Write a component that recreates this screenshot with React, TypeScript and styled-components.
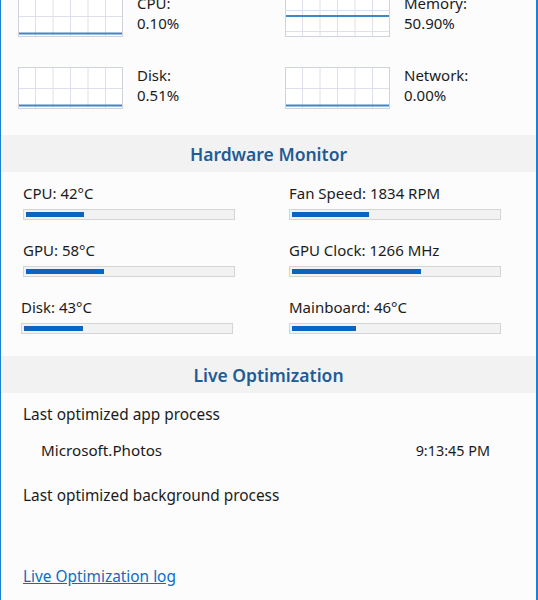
import React from "react";
import styled, { createGlobalStyle } from "styled-components";

const GlobalStyle = createGlobalStyle`
  html, body {
    margin: 0;
    padding: 0;
    background: #fcfcfc;
  }
  body {
    font-family: "Noto Sans", "Open Sans", sans-serif;
    font-size: 15px;
    color: #1b1b1b;
  }
`;

const usage = [
  { id: 1, label: "CPU:", value: "0.10%", level: 0.04, offset: 0 },
  { id: 2, label: "Memory:", value: "50.90%", level: 0.5, offset: 10 },
  { id: 3, label: "Disk:", value: "0.51%", level: 0.04, offset: 0 },
  { id: 4, label: "Network:", value: "0.00%", level: 0.04, offset: 0 },
];

const sensors = [
  { id: 1, label: "CPU: 42°C", pct: 28 },
  { id: 2, label: "Fan Speed: 1834 RPM", pct: 37.5 },
  { id: 3, label: "GPU: 58°C", pct: 38 },
  { id: 4, label: "GPU Clock: 1266 MHz", pct: 62.5 },
  { id: 5, label: "Disk: 43°C", pct: 28.5 },
  { id: 6, label: "Mainboard: 46°C", pct: 31 },
];

interface GraphProps {
  level: number;
  offset: number;
}

// small task-manager style chart with a scrolling grid
const Graph: React.FC<GraphProps> = ({ level, offset }) => {
  const w = 105;
  const h = 42;
  const cols = [17.5, 35, 52.5, 70, 87.5];
  const rows = offset ? [15, 36] : [21];
  const y = h - 2 - level * (h - 4);
  return (
    <svg width={w} height={h} viewBox={`0 0 ${w} ${h}`}>
      <rect x="0.5" y="0.5" width={w - 1} height={h - 1} fill="#ffffff" stroke="#cfd3de" />
      {cols.map((x) => (
        <line key={x} x1={x} y1="1" x2={x} y2={h - 1} stroke="#dde0ea" />
      ))}
      {rows.map((r) => (
        <line key={r} x1="1" y1={r + 0.5} x2={w - 1} y2={r + 0.5} stroke="#dde0ea" />
      ))}
      <line x1="1" y1={y} x2={w - 1} y2={y} stroke="#3f88c5" strokeWidth="2" />
    </svg>
  );
};

export default function App() {
  return (
    <>
      <GlobalStyle />
      <Window>
        <UsageGrid>
          {usage.map((u) => (
            <UsageItem key={u.id}>
              <Graph level={u.level} offset={u.offset} />
              <UsageText>
                <div>{u.label}</div>
                <div>{u.value}</div>
              </UsageText>
            </UsageItem>
          ))}
        </UsageGrid>

        <SectionHeader>Hardware Monitor</SectionHeader>
        <SensorGrid>
          {sensors.map((s) => (
            <Sensor key={s.id} $shift={s.id === 5}>
              <SensorLabel>{s.label}</SensorLabel>
              <Bar>
                <Fill style={{ width: `${s.pct}%` }} />
              </Bar>
            </Sensor>
          ))}
        </SensorGrid>

        <SectionHeader>Live Optimization</SectionHeader>
        <LiveBody>
          <Line>Last optimized app process</Line>
          <ProcessRow>
            <span>Microsoft.Photos</span>
            <Time>9:13:45 PM</Time>
          </ProcessRow>
          <Line>Last optimized background process</Line>
          <LogLink href="#">Live Optimization log</LogLink>
        </LiveBody>
      </Window>
    </>
  );
}

const Window = styled.div`
  box-sizing: border-box;
  width: 538px;
  height: 600px;
  overflow: hidden;
  background: #fcfcfc;
  border-left: 1px solid #1c80d6;
  border-right: 2px solid #1c80d6;
  display: flex;
  flex-direction: column;
`;

const UsageGrid = styled.section`
  display: grid;
  grid-template-columns: 267px 1fr;
  row-gap: 30px;
  margin-top: -5px;
  padding-left: 17px;
  padding-bottom: 26px;
`;

const UsageItem = styled.div`
  display: flex;
  align-items: flex-start;
  gap: 14px;
  height: 42px;
`;

const UsageText = styled.div`
  line-height: 20px;
  margin-top: -2px;
`;

const SectionHeader = styled.h2`
  margin: 0;
  height: 37px;
  background: #f2f2f2;
  display: flex;
  align-items: center;
  justify-content: center;
  font-size: 17.5px;
  font-weight: 600;
  color: #1f5c96;
`;

const SensorGrid = styled.section`
  display: grid;
  grid-template-columns: 266px 1fr;
  row-gap: 21px;
  padding: 12px 0 22px 22px;
`;

const Sensor = styled.div<{ $shift?: boolean }>`
  display: flex;
  flex-direction: column;
  gap: 6px;
  margin-left: ${(p) => (p.$shift ? "-2px" : "0")};
`;

const SensorLabel = styled.div`
  line-height: 19px;
`;

const Bar = styled.div`
  box-sizing: border-box;
  width: 212px;
  height: 11px;
  padding: 2px;
  background: #f2f2f2;
  border: 1px solid #d5d5d5;
`;

const Fill = styled.div`
  height: 100%;
  background: #0a64c2;
`;

const LiveBody = styled.section`
  display: flex;
  flex-direction: column;
  padding: 12px 46px 0 22px;
  font-size: 15.4px;
`;

const Line = styled.div`
  line-height: 19px;
`;

const ProcessRow = styled.div`
  display: flex;
  justify-content: space-between;
  align-items: baseline;
  padding: 17px 0 26px 18px;
  line-height: 19px;
  font-size: 15.2px;
`;

const Time = styled.span`
  font-size: 14.4px;
`;

const LogLink = styled.a`
  margin-top: 62px;
  color: #0b6cc7;
  text-decoration: underline;
  line-height: 19px;
  align-self: flex-start;
`;
